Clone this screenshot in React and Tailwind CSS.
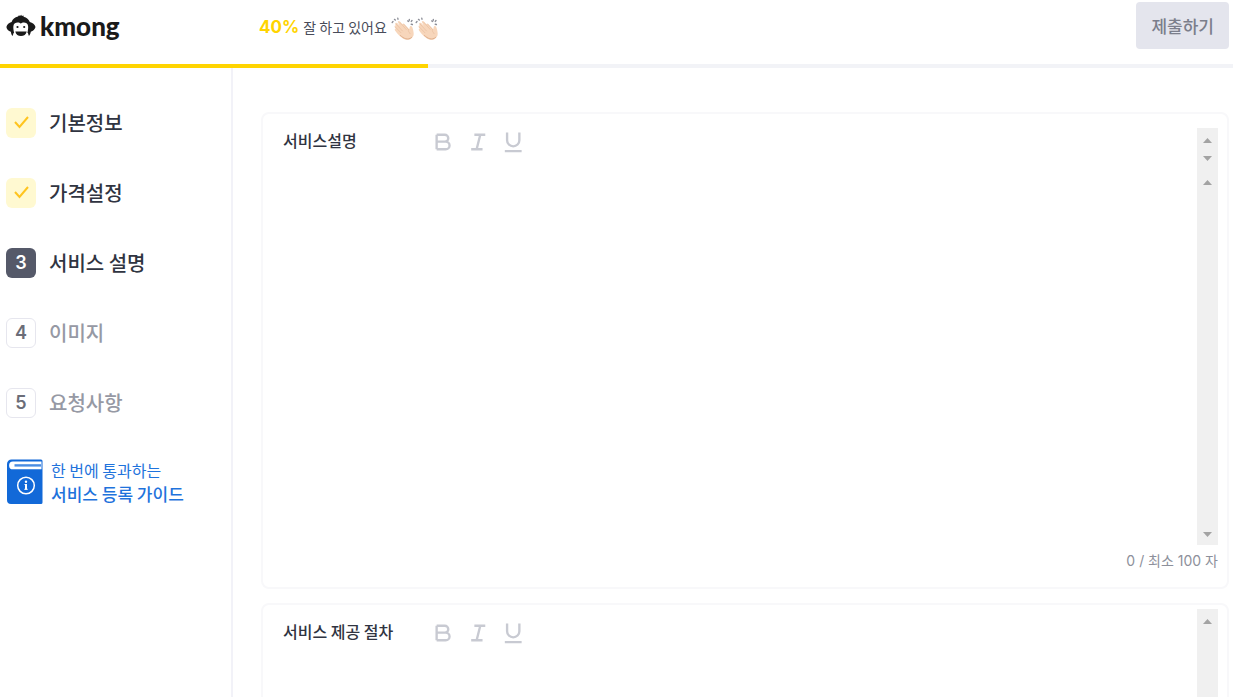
import React, { useState } from "react";

const steps = [
  { id: 1, name: "기본정보", status: "done" },
  { id: 2, name: "가격설정", status: "done" },
  { id: 3, name: "서비스 설명", status: "current" },
  { id: 4, name: "이미지", status: "todo" },
  { id: 5, name: "요청사항", status: "todo" },
];

const sections = [
  { id: "description", title: "서비스설명", min: 100, nested: true },
  { id: "process", title: "서비스 제공 절차", nested: false },
];

const badgeStyles = {
  done: "bg-[#fff9d1]",
  current: "bg-[#555969] text-white",
  todo: "border border-[#e6e6ee] text-[#6b6d78]",
};

const Logo = () => (
  <a href="#" aria-label="kmong" className="flex items-center gap-1 text-[#1a1a1a]">
    <svg width="30" height="24" viewBox="0 0 30 24" fill="none">
      <path
        d="M13 1.2 14 2 15.2.7l.7 1.2 1.6-.5.1 1.3c3.1.7 5.3 2.7 6.2 5.4 2.7.6 5.1 2.700 5.700 5-.5 2.200-2.400 4.200-4.700 4.700-.4 2-1 3.300-1.900 4.300l-1-3.200H7.600l-1 3.200c-1-1-1.500-2.400-1.800-4.300C2.500 17.300.6 15.300.4 13.100c.5-2.300 2.700-4.400 5.200-5C6.500 5.300 8.800 3.300 12 2.600z"
        fill="currentColor"
      />
      <path
        d="M14.800 9.600c1.500-1.700 6.700-2 7.300 2.300.3 2.500-.3 4-.4 5.700-.3 3.900-3.500 5.900-6.900 5.900s-6.700-2.400-7-5.900c-.1-1.700-.7-3.200-.4-5.700.6-4.300 5.900-4 7.400-2.300z"
        fill="#fff"
      />
      <circle cx="11.500" cy="13" r="1.100" fill="currentColor" />
      <circle cx="18.200" cy="13" r="1.100" fill="currentColor" />
      <path d="M9.300 17.400h11.400c-.5 3-2.900 4.500-5.700 4.500s-5.200-1.500-5.700-4.500z" fill="currentColor" />
    </svg>
    <span className="font-['Lato'] text-[26px] leading-8 font-black">kmong</span>
  </a>
);

const Clap = () => (
  <svg width="24" height="24" viewBox="0 0 24 24" fill="none" aria-hidden="true">
    <path
      d="M4.500 6.200c.8-.8 1.600-.3 2.200.4l2 2.200-2-4c.4-1.300 1.800-1.100 2.400-.1l2.200 2.500c.5-.9 1.600-.8 2.300.2l4.700 4.900c.4-1.600.2-3.200 1.200-3.400 1.600-.2 2.300 1.900 2.700 4.400.4 2.300 1 4.500-.2 6.300-1.100 1.700-2.500 3.200-4.700 3.200-3.800.1-7.700-2.500-10.300-5.600-1.300-1.500-3.400-3.600-3.300-4.600.1-.7.800-.9 1.300-.6-.8-1-1.800-2.300-1.300-3.100.2-.5.700-.6 1.200-.4-.6-.9-.9-1.700-.4-2.300z"
      fill="#f7d6bb"
    />
    <path
      d="m5 7 6.500 7M4.500 10.200l5.500 5.600M9 5.500l6.200 7M13 7.400l4.300 5M17.300 12.500c-.3 2 1 2.800 1.800 4.200"
      stroke="#e8bf9f"
      strokeWidth="0.700"
      strokeLinecap="round"
    />
    <path d="M9.500 18.500c3 3 7.500 5.200 11 2" stroke="#dfae8b" strokeWidth="1" strokeLinecap="round" />
    <path
      d="M1.200 5.400 2 4.600M3.500 2.400l.8.6M6.800 1.300l.2.900M16.700 3.900l1 .6M18.300 2.400v.8M21 3.500l-.7.900M20.200 7.200l1.200.3"
      stroke="#8d8f98"
      strokeWidth="1.400"
      strokeLinecap="round"
    />
  </svg>
);

const GuideIcon = () => (
  <svg width="36" height="46" viewBox="0 0 36 46" fill="none" aria-hidden="true">
    <path d="M4.500.5H34A1.500 1.500 0 0 1 35.500 2v41.500a1.500 1.500 0 0 1-1.500 1.500H4A4 4 0 0 1 0 41V5A4.500 4.500 0 0 1 4.500.5z" fill="#1269d8" />
    <path d="M34.500 2.500H6a3.900 3.900 0 0 0 0 7.800h28.500z" fill="#fff" />
    <path d="M7.500 6.400h26.500" stroke="#4a8de2" strokeWidth="2.400" />
    <circle cx="19" cy="26.500" r="8.300" stroke="#fff" strokeWidth="1.500" />
    <path d="M19 25v5.500" stroke="#fff" strokeWidth="2" />
    <path d="M17.500 25.500H19M17.300 30.300h3.400" stroke="#fff" strokeWidth="1" />
    <circle cx="19" cy="22.700" r="1.200" fill="#fff" />
  </svg>
);

const formats = [
  { label: "굵게", path: "M5 4v16M5 4h9a3.800 3.800 0 0 1 0 7.600H5M14 11.600h1a4.200 4.200 0 0 1 0 8.400H5" },
  { label: "기울임", path: "M8 4h12M4.500 20H17M14.500 4 10.500 20" },
  { label: "밑줄", path: "M5.500 1.500V10a6.700 6.700 0 0 0 13.500 0V1.500M3 22h18.500" },
];

const Toolbar = () => (
  <div className="flex items-center gap-[15px]">
    {formats.map((format) => (
      <button key={format.label} type="button" aria-label={format.label} className="text-[#c8cad2]">
        <svg width="20" height="24" viewBox="1 0 22 24" fill="none">
          <path d={format.path} stroke="currentColor" strokeWidth="2.600" />
        </svg>
      </button>
    ))}
  </div>
);

const Arrow = ({ down }) => (
  <svg width="9" height="5" viewBox="0 0 9 5" aria-hidden="true" className="fill-[#a3a3a3]">
    <path d={down ? "M0 0h9L4.500 5z" : "M0 5h9L4.500 0z"} />
  </svg>
);

const ScrollTrack = ({ nested }) => (
  <div className="flex w-[21px] shrink-0 flex-col items-center bg-[#f0f0f0] pt-[10px] pb-2">
    <Arrow />
    {nested && (
      <div className="mt-[13px] flex flex-col gap-[19px]">
        <Arrow down />
        <Arrow />
      </div>
    )}
    <div className="mt-auto flex">
      <Arrow down />
    </div>
  </div>
);

const EditorCard = ({ section }) => {
  const [text, setText] = useState("");

  return (
    <section className={`rounded-lg border-2 border-[#f8f8fa] pr-[9px] pb-[14px] pl-5 ${section.nested ? "pt-[14px]" : "pt-1"}`}>
      <div className="flex h-[417px]">
        <div className="flex min-w-0 flex-1 flex-col">
          <div className={`flex items-start ${section.nested ? "" : "pt-[10px]"}`}>
            <label htmlFor={section.id} className="w-[150px] text-base leading-6 font-medium text-[#303441]">
              {section.title}
            </label>
            <div className="pt-[2px]">
              <Toolbar />
            </div>
          </div>
          <textarea
            id={section.id}
            value={text}
            onChange={(e) => setText(e.target.value)}
            className="w-full flex-1 resize-none outline-none"
          />
        </div>
        <ScrollTrack nested={section.nested} />
      </div>
      {section.min && (
        <p className="pt-1 text-right font-['Inter','Noto_Sans_CJK_KR',sans-serif] text-sm leading-6 text-[#8d909b]">
          {text.length} / 최소 {section.min} 자
        </p>
      )}
    </section>
  );
};

const App = () => {
  return (
    <div className="flex h-screen flex-col bg-white font-['Noto_Sans_CJK_KR',sans-serif]">
      <header className="flex h-16 shrink-0 items-start justify-between pt-[2px] pr-1 pl-[6px]">
        <div className="flex">
          <div className="w-[253px] pt-2">
            <Logo />
          </div>
          <p className="flex h-[50px] items-center text-sm text-[#484b59]">
            <strong className="mr-1 font-['Inter'] text-[17px] font-bold text-[#ffd400]">40%</strong>
            잘 하고 있어요
            <span className="ml-1 flex pt-1">
              <Clap />
              <Clap />
            </span>
          </p>
        </div>
        <button type="button" className="h-[47px] rounded bg-[#e4e5ed] px-[15px] text-[17px] font-medium text-[#7b7e8b]">
          제출하기
        </button>
      </header>

      <div className="h-1 shrink-0 bg-[#f2f3f7]">
        <div className="h-full bg-[#ffd400]" style={{ width: "34.7%" }}></div>
      </div>

      <div className="flex min-h-0 flex-1">
        <aside className="w-[233px] shrink-0 border-r-2 border-[#f2f2f8] pt-10 pl-[6px]">
          <nav className="flex flex-col gap-10">
            {steps.map((step) => (
              <a key={step.id} href="#" className="flex h-[30px] items-center gap-[13px]">
                <span
                  className={`flex h-[30px] w-[30px] items-center justify-center rounded-md font-['Inter'] text-lg font-semibold ${
                    badgeStyles[step.status]
                  }`}>
                  {step.status === "done" ? (
                    <svg width="16" height="14" viewBox="0 0 16 14" fill="none">
                      <path d="M2 6 6.500 11 15 1" stroke="#ffc41f" strokeWidth="2" />
                    </svg>
                  ) : (
                    step.id
                  )}
                </span>
                <span
                  className={`text-xl font-medium ${
                    step.status === "todo" ? "text-[#9699a4]" : "text-[#303441]"
                  }`}>
                  {step.name}
                </span>
              </a>
            ))}
          </nav>
          <a href="#" className="mt-10 flex items-center gap-2 pl-px text-[#1f73dc]">
            <GuideIcon />
            <span className="flex flex-col">
              <span className="text-base leading-6">한 번에 통과하는</span>
              <span className="text-[17px] leading-6 font-medium">서비스 등록 가이드</span>
            </span>
          </a>
        </aside>

        <main className="flex min-w-0 flex-1 flex-col gap-[14px] overflow-y-auto pt-11 pr-1 pl-7 [scrollbar-width:none]">
          {sections.map((section) => (
            <EditorCard key={section.id} section={section} />
          ))}
        </main>
      </div>
    </div>
  );
};

export default App;
